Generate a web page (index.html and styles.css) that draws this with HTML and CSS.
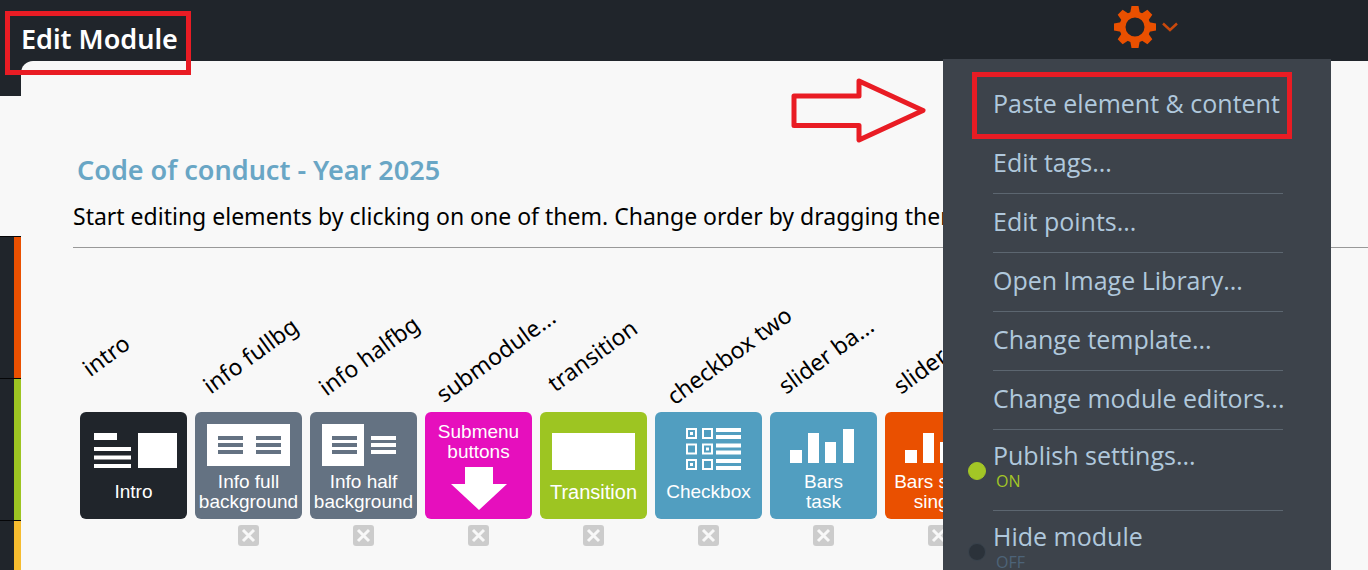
FILE: index.html
```html
<!DOCTYPE html>
<html lang="en">
<head>
    <meta charset="UTF-8">
    <meta name="viewport" content="width=device-width, initial-scale=1.0">
    <title>Edit Module</title>
    <link rel="stylesheet" href="styles.css">
</head>
<body>
    <header class="topbar">
        <h1 class="page-title">Edit Module<span class="mark mark-title"></span></h1>
        <button class="settings-btn" aria-label="Settings" aria-expanded="true">
            <svg width="42" height="42" viewBox="-21 -21 42 42" fill="#ea5000">
                <defs><path id="tooth" d="M-5 -13L-3.500 -21H3.500L5 -13Z"/></defs>
                <circle r="12.500" fill="none" stroke="#ea5000" stroke-width="6"/>
                <use href="#tooth"/>
                <use href="#tooth" transform="rotate(45)"/>
                <use href="#tooth" transform="rotate(90)"/>
                <use href="#tooth" transform="rotate(135)"/>
                <use href="#tooth" transform="rotate(180)"/>
                <use href="#tooth" transform="rotate(225)"/>
                <use href="#tooth" transform="rotate(270)"/>
                <use href="#tooth" transform="rotate(315)"/>
            </svg>
            <svg width="16" height="10" viewBox="0 0 16 10" fill="none" stroke="#c9490c" stroke-width="2.500">
                <path d="M1 1.500L8 8L15 1.500"/>
            </svg>
        </button>

        <ul class="menu">
            <li><button class="menu-item">Paste element &amp; content</button><span class="mark mark-paste"></span></li>
            <li><button class="menu-item">Edit tags...</button></li>
            <li><button class="menu-item">Edit points...</button></li>
            <li><button class="menu-item">Open Image Library...</button></li>
            <li><button class="menu-item">Change template...</button></li>
            <li><button class="menu-item">Change module editors...</button></li>
            <li><span class="dot on"></span><button class="menu-item toggle">Publish settings...<small class="state on">ON</small></button></li>
            <li><span class="dot"></span><button class="menu-item toggle">Hide module<small class="state">OFF</small></button></li>
        </ul>

        <svg class="arrow" width="140" height="70" viewBox="788 75 140 70" fill="none" stroke="#e91c24" stroke-width="5" stroke-linejoin="round">
            <path d="M794 96H859V81L923 110.500L859 140V125.500H794Z"/>
        </svg>
    </header>

    <div class="layout">
        <nav class="sidebar">
            <div class="side-top"></div>
            <div class="side-list">
                <div class="side-item orange"></div>
                <div class="side-item green"></div>
                <div class="side-item yellow"></div>
            </div>
        </nav>

        <main class="content">
            <h2>Code of conduct - Year 2025</h2>
            <p class="help">Start editing elements by clicking on one of them. Change order by dragging them.</p>

            <div class="elements">
                <div class="element">
                    <span class="label">intro</span>
                    <button class="tile dark">
                        <svg width="107" height="60" fill="#fff">
                            <path d="M14 21h23v7H14zM14 35h37v4H14zM14 43.500h37v4H14zM14 52h37v4H14zM58 21h39v35H58z"/>
                        </svg>
                        <span class="name">Intro</span>
                    </button>
                </div>
                <div class="element">
                    <span class="label">info fullbg</span>
                    <button class="tile slate">
                        <svg width="107" height="60" fill="#fff">
                            <path d="M12 12h83v42H12z"/>
                            <path fill="#647282" d="M23 24h25v4H23zM23 31h25v4H23zM23 38h25v4H23zM61 24h25v4H61zM61 31h25v4H61zM61 38h25v4H61z"/>
                        </svg>
                        <span class="name">Info full<br>background</span>
                    </button>
                    <button class="remove" aria-label="Remove info fullbg"><svg width="21" height="21"><path d="M5 5L16 16M16 5L5 16"/></svg></button>
                </div>
                <div class="element">
                    <span class="label">info halfbg</span>
                    <button class="tile slate">
                        <svg width="107" height="60" fill="#fff">
                            <path d="M12 12h42v42H12zM61 24h25v4H61zM61 31h25v4H61zM61 38h25v4H61z"/>
                            <path fill="#647282" d="M22 24h25v4H22zM22 31h25v4H22zM22 38h25v4H22z"/>
                        </svg>
                        <span class="name">Info half<br>background</span>
                    </button>
                    <button class="remove" aria-label="Remove info halfbg"><svg width="21" height="21"><path d="M5 5L16 16M16 5L5 16"/></svg></button>
                </div>
                <div class="element">
                    <span class="label">submodule...</span>
                    <button class="tile pink">
                        <span class="name">Submenu<br>buttons</span>
                        <svg width="107" height="57" fill="#fff">
                            <path d="M40 5h28v17h14L54 48L26 22h14z"/>
                        </svg>
                    </button>
                    <button class="remove" aria-label="Remove submodule"><svg width="21" height="21"><path d="M5 5L16 16M16 5L5 16"/></svg></button>
                </div>
                <div class="element">
                    <span class="label">transition</span>
                    <button class="tile green large">
                        <svg width="107" height="60" fill="#fff">
                            <path d="M12 21h83v37H12z"/>
                        </svg>
                        <span class="name">Transition</span>
                    </button>
                    <button class="remove" aria-label="Remove transition"><svg width="21" height="21"><path d="M5 5L16 16M16 5L5 16"/></svg></button>
                </div>
                <div class="element">
                    <span class="label">checkbox two</span>
                    <button class="tile blue">
                        <svg width="107" height="60" fill="#fff">
                            <path fill="none" stroke="#fff" stroke-width="2" d="M32 17h9v9h-9zM48 17h9v9h-9zM32 32.500h9v9h-9zM48 32.500h9v9h-9zM32 48h9v9h-9zM48 48h9v9h-9z"/>
                            <path d="M35 20h3v3h-3zM51 35.500h3v3h-3zM35 51h3v3h-3z"/>
                            <path d="M61 16h25v4H61zM61 23h25v4H61zM61 31.500h25v4H61zM61 38.500h25v4H61zM61 47h25v4H61zM61 54h25v4H61z"/>
                        </svg>
                        <span class="name">Checkbox</span>
                    </button>
                    <button class="remove" aria-label="Remove checkbox two"><svg width="21" height="21"><path d="M5 5L16 16M16 5L5 16"/></svg></button>
                </div>
                <div class="element">
                    <span class="label">slider ba...</span>
                    <button class="tile blue">
                        <svg width="107" height="60" fill="#fff">
                            <path d="M20 38h12v13H20zM38 21h11v30H38zM55 30h11v21H55zM73 17h11v34H73z"/>
                        </svg>
                        <span class="name">Bars<br>task</span>
                    </button>
                    <button class="remove" aria-label="Remove slider bars"><svg width="21" height="21"><path d="M5 5L16 16M16 5L5 16"/></svg></button>
                </div>
                <div class="element">
                    <span class="label">slider ba...</span>
                    <button class="tile orange">
                        <svg width="107" height="60" fill="#fff">
                            <path d="M20 38h12v13H20zM38 21h11v30H38zM55 30h11v21H55zM73 17h11v34H73z"/>
                        </svg>
                        <span class="name">Bars scale<br>single</span>
                    </button>
                    <button class="remove" aria-label="Remove slider single"><svg width="21" height="21"><path d="M5 5L16 16M16 5L5 16"/></svg></button>
                </div>
            </div>
        </main>
    </div>
</body>
</html>
```
FILE: styles.css
```css
* {
    margin: 0;
    padding: 0;
    box-sizing: border-box;
}

body {
    display: flex;
    flex-direction: column;
    height: 100vh;
    overflow: hidden;
    background: #20252b;
    color: #000;
    font-family: 'Segoe UI', 'Noto Sans', sans-serif;
}

button {
    border: none;
    background: none;
    font: inherit;
    color: inherit;
    cursor: pointer;
}

svg {
    display: block;
    flex: none;
}

/* Top bar */
.topbar {
    position: relative;
    z-index: 2;
    display: flex;
    flex: none;
    justify-content: space-between;
    align-items: flex-start;
    height: 61px;
    padding: 6px 190px 0 21px;
}

.page-title {
    position: relative;
    padding-top: 16px;
    color: #fff;
    font-size: 27px;
    font-weight: 600;
    line-height: 34px;
}

.settings-btn {
    display: flex;
    align-items: center;
    gap: 6px;
}

/* Red highlights */
.mark {
    position: absolute;
    border: 5px solid #e91c24;
    pointer-events: none;
}

.mark-title {
    inset: 5px -13px -19px -16px;
}

.mark-paste {
    inset: -4px -9px -4px 4px;
}

.arrow {
    position: absolute;
    top: 75px;
    right: 440px;
}

/* Settings menu */
.menu {
    position: absolute;
    top: 59px;
    right: 37px;
    width: 388px;
    padding: 17px 48px 17px 25px;
    background: #3d434b;
    color: #b0c8dc;
    font-family: 'Open Sans', sans-serif;
    list-style: none;
}

.menu li {
    position: relative;
    display: grid;
    grid-template-columns: 25px minmax(0, 1fr);
    align-items: center;
}

.menu-item {
    grid-column: 2;
    padding: 10px 0 14px;
    border-bottom: 1px solid #5c6670;
    font-size: 25px;
    line-height: 34px;
    text-align: left;
    white-space: nowrap;
}

.toggle {
    padding: 8px 0 20px;
}

.dot {
    width: 18px;
    height: 18px;
    border: 1px solid #39424c;
    border-radius: 50%;
    background: #2b323a;
}

.dot.on {
    border-color: #a3c626;
    background: #a3c626;
}

.state {
    display: block;
    padding-left: 3px;
    color: #4d6378;
    font-size: 16px;
    line-height: 18px;
}

.state.on {
    color: #a3c626;
}

/* Sidebar */
.layout {
    display: flex;
    flex: 1;
    min-height: 0;
}

.sidebar {
    display: flex;
    flex: none;
    flex-direction: column;
    width: 21px;
}

.side-top {
    flex: none;
    height: 35px;
}

.side-list {
    flex: 1;
    padding-top: 140px;
    background: #f8f8f8;
}

.side-item {
    height: 142px;
    border-top: 1px solid #050608;
    background: linear-gradient(to left, currentColor 7px, #20252b 7px);
}

.side-item.orange {
    color: #ea5000;
}

.side-item.green {
    color: #9dc522;
}

.side-item.yellow {
    color: #f6bc2f;
}

/* Content */
.content {
    flex: 1;
    min-width: 0;
    overflow: hidden;
    padding: 92px 0 0 52px;
    border-top-left-radius: 12px;
    background: #f8f8f8;
}

h2 {
    padding-left: 4px;
    color: #69a6c5;
    font-size: 27px;
    font-weight: 600;
    line-height: 34px;
}

.help {
    padding: 12px 0 14px;
    border-bottom: 1px solid #999;
    font-size: 23px;
    line-height: 34px;
    white-space: nowrap;
}

.elements {
    display: flex;
    gap: 8px;
    padding: 90px 0 0 7px;
}

.element {
    display: flex;
    flex: none;
    flex-direction: column;
    align-items: center;
    width: 107px;
}

.label {
    align-self: flex-start;
    margin-bottom: 40px;
    font-size: 23px;
    line-height: 34px;
    white-space: nowrap;
    transform: rotate(-36deg);
}

.tile {
    display: flex;
    flex-direction: column;
    align-items: center;
    justify-content: flex-start;
    width: 107px;
    height: 107px;
    overflow: hidden;
    border-radius: 6px;
    color: #fff;
    font: 19px/20px 'Liberation Sans', Arial, sans-serif;
    white-space: nowrap;
}

.name {
    display: grid;
    align-content: center;
    height: 40px;
}

.tile.dark {
    background: #20252b;
}

.tile.slate {
    background: #647282;
}

.tile.pink {
    padding-top: 10px;
    background: #e60fbd;
}

.tile.green {
    background: #9dc522;
}

.tile.blue {
    background: #519ec0;
}

.tile.orange {
    background: #ea5000;
}

.tile.large {
    font-size: 20px;
}

.remove {
    width: 21px;
    height: 21px;
    margin-top: 6px;
    border-radius: 3px;
    background: #ccc;
}

.remove path {
    stroke: #f8f8f8;
    stroke-width: 3;
}
```
